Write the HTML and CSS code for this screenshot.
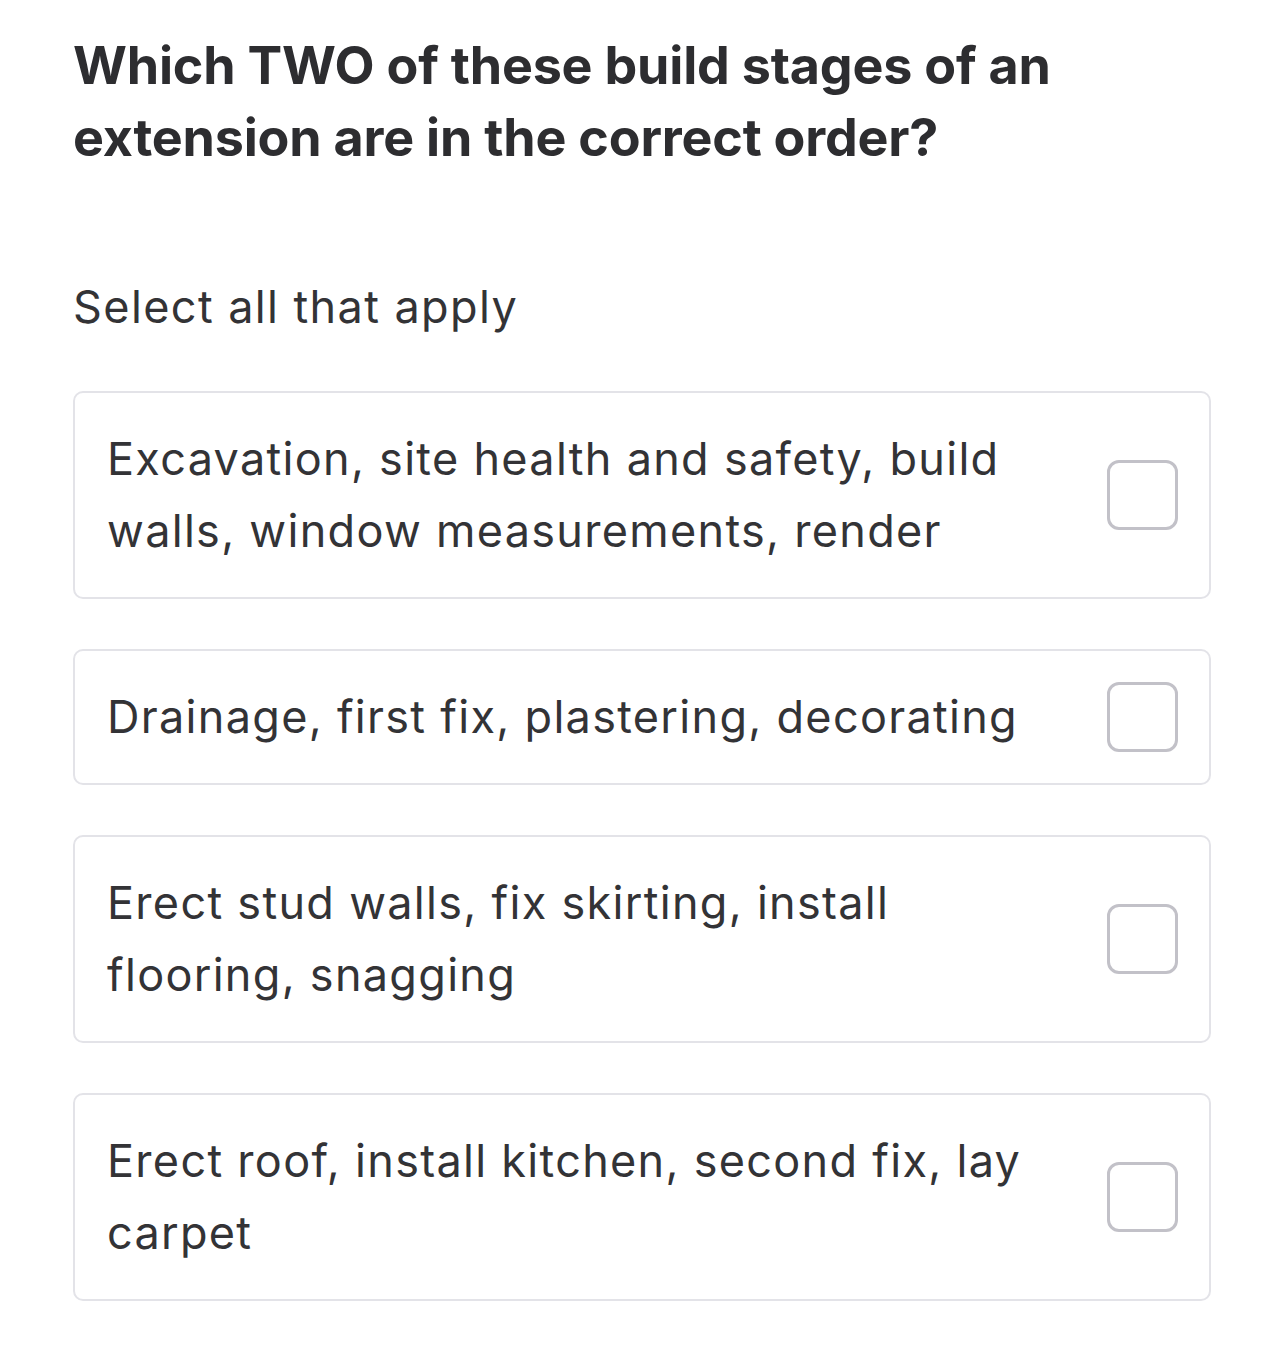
FILE: index.html
```html
<!DOCTYPE html>
<html lang="en">
<head>
<meta charset="utf-8">
<title>Question</title>
<link rel="stylesheet" href="styles.css">
</head>
<body>
<main class="page">
  <h1 class="question">Which TWO of these build stages of an extension are in the correct order?</h1>
  <p class="hint">Select all that apply</p>
  <ul class="options">
    <li class="option">
      <span class="option-text">Excavation, site health and safety, build walls, window measurements, render</span>
      <span class="checkbox"></span>
    </li>
    <li class="option">
      <span class="option-text">Drainage, first fix, plastering, decorating</span>
      <span class="checkbox"></span>
    </li>
    <li class="option">
      <span class="option-text">Erect stud walls, fix skirting, install flooring, snagging</span>
      <span class="checkbox"></span>
    </li>
    <li class="option">
      <span class="option-text">Erect roof, install kitchen, second fix, lay carpet</span>
      <span class="checkbox"></span>
    </li>
  </ul>
</main>
</body>
</html>
```

FILE: styles.css
```css
html, body {
  margin: 0;
  padding: 0;
  background: #ffffff;
}
body {
  font-family: Inter, "Noto Sans", sans-serif;
  color: #333336;
}
.page {
  padding: 30px 73px 40px;
}
.question {
  margin: 0;
  font-size: 52px;
  line-height: 72px;
  font-weight: 700;
  letter-spacing: -0.2px;
  color: #2d2d30;
  max-width: 1050px;
}
.hint {
  margin: 97px 0 0;
  font-size: 45px;
  line-height: 72px;
  font-weight: 400;
  letter-spacing: 1.4px;
}
.options {
  list-style: none;
  margin: 48px 0 0;
  padding: 0;
  display: flex;
  flex-direction: column;
  gap: 50px;
}
.option {
  display: flex;
  align-items: center;
  justify-content: space-between;
  gap: 40px;
  border: 2px solid #e3e3e8;
  border-radius: 10px;
  padding: 30px 31px 30px 32px;
}
.option-text {
  font-size: 45px;
  line-height: 72px;
  letter-spacing: 1.3px;
  max-width: 930px;
}
.checkbox {
  flex: none;
  width: 65px;
  height: 64px;
  border: 3px solid #c2c1c8;
  border-radius: 12px;
}
```
